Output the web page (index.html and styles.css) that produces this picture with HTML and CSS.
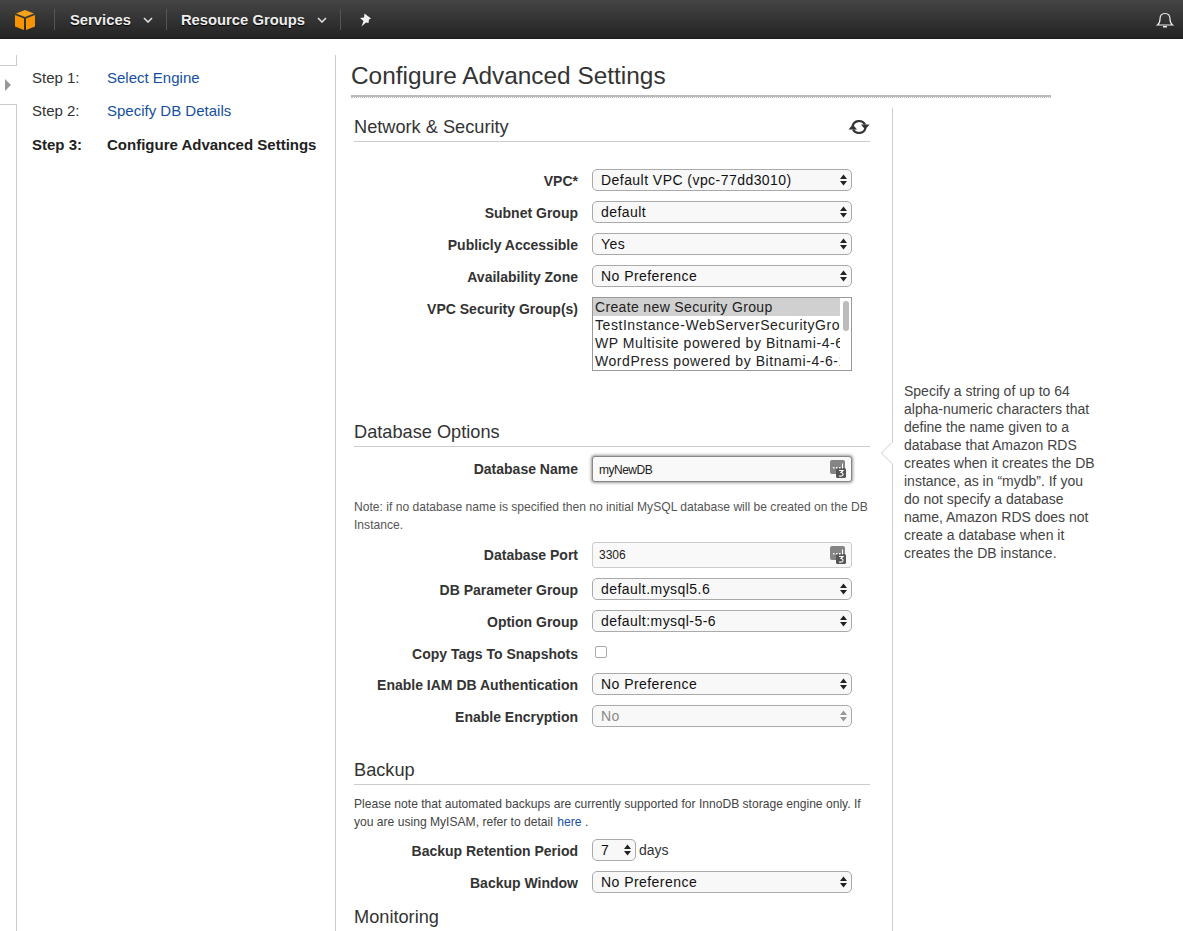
FILE: index.html
```html
<!DOCTYPE html>
<html lang="en">
<head>
    <meta charset="UTF-8">
    <title>Configure Advanced Settings</title>
    <link rel="stylesheet" href="styles.css">
</head>
<body>

    <!-- shared icons -->
    <svg class="sprites" width="0" height="0">
        <symbol id="updown" viewBox="0 0 7 12"><path d="M3.5 0.5 L7 5 H0 Z M3.5 11.5 L7 7 H0 Z"/></symbol>
        <symbol id="keypad" viewBox="0 0 16 18">
            <rect x="0" y="0" width="15" height="14" rx="2" fill="#858585"/>
            <rect x="6" y="8" width="10" height="10" rx="1.5" fill="#555"/>
            <path d="M3 7 h1.5 v1.5 h-1.5 Z M6 7 h1.5 v1.5 h-1.5 Z M9 7 h1.5 v1.5 h-1.5 Z M12 3.5 h1 v5 h-1 Z" fill="#fff"/>
            <path d="M9 10.5 H13 L11 12.5 Q13.5 13 13 14.8 Q12.5 16.5 9 16" fill="none" stroke="#fff" stroke-width="1.1"/>
        </symbol>
        <symbol id="caret" viewBox="0 0 10 6"><path d="M1 1 L5 5 L9 1" fill="none" stroke="#ddd" stroke-width="1.6"/></symbol>
    </svg>

    <div class="navbar">
        <a class="nav-logo" href="#">
            <svg width="24" height="24" viewBox="0 0 24 24">
                <path d="M12 2 L21 5.5 L12 9 L3 5.5 Z" fill="#f7a21b"/>
                <path d="M2 7 L11 10.5 L11 22 L2 18.5 Z" fill="#f79400"/>
                <path d="M22 7 L13 10.5 L13 22 L22 18.5 Z" fill="#f79400"/>
            </svg>
        </a>
        <a class="nav-item nav-services" href="#">Services<svg class="caret" width="10" height="6"><use href="#caret"/></svg></a>
        <a class="nav-item nav-groups" href="#">Resource Groups<svg class="caret" width="10" height="6"><use href="#caret"/></svg></a>
        <a class="nav-pin" href="#">
            <svg width="14" height="14" viewBox="0 0 14 14"><path d="M6.5 0.5 L13 5.5 L11 6.5 L10.5 10 L8 9.5 L3.5 13.5 L5.5 8 L2 5 L6 4.5 Z" fill="#f2f2f2"/></svg>
        </a>
        <a class="nav-bell" href="#">
            <svg width="18" height="18" viewBox="0 0 18 18"><path d="M1.5 14 C3.5 12.5 4 11 4 8 C4 4.5 6 2.5 9 2.5 C12 2.5 14 4.5 14 8 C14 11 14.5 12.5 16.5 14 Z" fill="none" stroke="#eee" stroke-width="1.2"/><path d="M7 15 H11 V16.5 H7 Z" fill="#eee"/></svg>
        </a>
    </div>

    <div class="page">
        <div class="drawer">
            <div class="drawer-top"></div>
            <div class="drawer-arrow"></div>
            <div class="drawer-bottom"></div>
        </div>

        <div class="steps">
            <div class="step"><span class="step-num">Step 1:</span><a href="#">Select Engine</a></div>
            <div class="step"><span class="step-num">Step 2:</span><a href="#">Specify DB Details</a></div>
            <div class="step current"><span class="step-num">Step 3:</span><span>Configure Advanced Settings</span></div>
        </div>

        <div class="content">
            <h1>Configure Advanced Settings</h1>
            <div class="title-dots"></div>

            <div class="columns">
                <div class="form">
                    <h2 class="first">Network &amp; Security
                        <svg width="22" height="18" viewBox="0 0 22 18"><path d="M4.5 8 A6.8 6.8 0 0 1 17 6.5" fill="none" stroke="#333" stroke-width="2.2"/><path d="M13 6.5 H21.5 L17.2 11.5 Z" fill="#333"/><path d="M17.5 10 A6.8 6.8 0 0 1 5 11.5" fill="none" stroke="#333" stroke-width="2.2"/><path d="M9 11.5 H0.5 L4.8 6.5 Z" fill="#333"/></svg>
                    </h2>

                    <div class="rows top-rows">
                        <div class="row"><label>VPC*</label><div class="select"><span>Default VPC (vpc-77dd3010)</span><svg class="arrows" width="7" height="12"><use href="#updown"/></svg></div></div>
                        <div class="row"><label>Subnet Group</label><div class="select"><span>default</span><svg class="arrows" width="7" height="12"><use href="#updown"/></svg></div></div>
                        <div class="row"><label>Publicly Accessible</label><div class="select"><span>Yes</span><svg class="arrows" width="7" height="12"><use href="#updown"/></svg></div></div>
                        <div class="row"><label>Availability Zone</label><div class="select"><span>No Preference</span><svg class="arrows" width="7" height="12"><use href="#updown"/></svg></div></div>
                        <div class="row row-list">
                            <label>VPC Security Group(s)</label>
                            <div class="listbox">
                                <div class="list-items">
                                    <div class="selected">Create new Security Group</div>
                                    <div>TestInstance-WebServerSecurityGroup-1A2B</div>
                                    <div>WP Multisite powered by Bitnami-4-6-1</div>
                                    <div>WordPress powered by Bitnami-4-6-1-0</div>
                                </div>
                                <div class="list-scroll"><div class="list-thumb"></div></div>
                            </div>
                        </div>
                    </div>

                    <h2 class="db-title">Database Options</h2>
                    <div class="row row-db"><label>Database Name</label>
                        <div class="input focused"><span>myNewDB</span><svg class="key" width="16" height="18"><use href="#keypad"/></svg></div>
                    </div>
                    <p class="note">Note: if no database name is specified then no initial MySQL database will be created on the DB Instance.</p>
                    <div class="rows">
                        <div class="row row-port"><label>Database Port</label>
                            <div class="input"><span>3306</span><svg class="key" width="16" height="18"><use href="#keypad"/></svg></div>
                        </div>
                        <div class="row row-param"><label>DB Parameter Group</label><div class="select"><span>default.mysql5.6</span><svg class="arrows" width="7" height="12"><use href="#updown"/></svg></div></div>
                        <div class="row"><label>Option Group</label><div class="select"><span>default:mysql-5-6</span><svg class="arrows" width="7" height="12"><use href="#updown"/></svg></div></div>
                        <div class="row"><label>Copy Tags To Snapshots</label><div class="checkbox"></div></div>
                        <div class="row row-iam"><label>Enable IAM DB Authentication</label><div class="select"><span>No Preference</span><svg class="arrows" width="7" height="12"><use href="#updown"/></svg></div></div>
                        <div class="row"><label>Enable Encryption</label><div class="select disabled"><span>No</span><svg class="arrows" width="7" height="12"><use href="#updown"/></svg></div></div>
                    </div>

                    <h2 class="backup-title">Backup</h2>
                    <p class="note backup-note">Please note that automated backups are currently supported for InnoDB storage engine only. If you are using MyISAM, refer to detail <a href="#">here</a> .</p>
                    <div class="rows backup-rows">
                        <div class="row"><label>Backup Retention Period</label><div class="select small"><span>7</span><svg class="arrows" width="7" height="12"><use href="#updown"/></svg></div><span class="unit">days</span></div>
                        <div class="row"><label>Backup Window</label><div class="select"><span>No Preference</span><svg class="arrows" width="7" height="12"><use href="#updown"/></svg></div></div>
                    </div>
                    <h2 class="monitoring-title">Monitoring</h2>
                </div>

                <div class="help">
                    <div class="help-tip"></div>
                    <p>Specify a string of up to 64 alpha-numeric characters that define the name given to a database that Amazon RDS creates when it creates the DB instance, as in “mydb”. If you do not specify a database name, Amazon RDS does not create a database when it creates the DB instance.</p>
                </div>
            </div>
        </div>
    </div>

</body>
</html>
```

FILE: styles.css
```css
html, body {
    height: 100%;
}

body {
    font-family: "Liberation Sans", Arial, sans-serif;
    font-size: 14px;
    color: #333;
    margin: 0;
    background-color: #fff;
    overflow: hidden;
}

a {
    color: #14509f;
    text-decoration: none;
}

.sprites {
    position: absolute;
}

/* top navigation */
.navbar {
    display: flex;
    align-items: center;
    height: 39px;
    background: linear-gradient(#454545, #232323);
    box-sizing: border-box;
    border-bottom: 1px solid #1c1c1c;
    padding-top: 1px;
}

.navbar a {
    display: flex;
    align-items: center;
    height: 21px;
    color: #eee;
    font-size: 14.8px;
    font-weight: bold;
}

.nav-logo {
    width: 55px;
    padding-left: 13px;
    box-sizing: border-box;
    border-right: 1px solid #555;
}

.nav-item {
    border-right: 1px solid #555;
    text-shadow: 0 1px 1px #000;
}

.nav-services {
    padding: 0 13px 0 15px;
}

.nav-groups {
    padding: 0 13px 0 14px;
}

.caret {
    margin-left: 12px;
}

.nav-pin {
    padding-left: 17px;
}

.nav-bell {
    margin-left: auto;
    padding-right: 9px;
}

/* page layout */
.page {
    display: flex;
    height: 892px;
    padding-top: 16px;
    box-sizing: border-box;
}

.drawer {
    width: 17px;
    flex: none;
}

.drawer-top {
    height: 10px;
    border-right: 1px solid #ccc;
    border-bottom: 1px solid #ccc;
}

.drawer-arrow {
    width: 0;
    height: 0;
    margin: 13px 0 13px 5px;
    border-left: 6px solid #999;
    border-top: 6px solid transparent;
    border-bottom: 6px solid transparent;
}

.drawer-bottom {
    height: 830px;
    border-right: 1px solid #ccc;
    border-top: 1px solid #ccc;
}

.steps {
    width: 319px;
    flex: none;
    box-sizing: border-box;
    padding: 6px 0 0 15px;
    border-right: 1px solid #ccc;
    font-size: 15px;
}

.step {
    display: flex;
    height: 33px;
    line-height: 33px;
}

.step-num {
    width: 75px;
    flex: none;
}

.step.current {
    margin-top: 1px;
    font-weight: bold;
    color: #222;
}

/* main content */
.content {
    width: 750px;
    flex: none;
    padding-left: 15px;
}

h1 {
    width: 700px;
    margin: 0;
    box-sizing: border-box;
    padding: 6px 0 4px 0;
    font-size: 24.4px;
    line-height: 30px;
    font-weight: normal;
    color: #333;
    border-bottom: 2px solid #bbb;
}

.title-dots {
    width: 700px;
    border-top: 1px dotted #bbb;
}

.columns {
    display: flex;
    margin-top: 10px;
}

.form {
    width: 516px;
    flex: none;
    margin-left: 3px;
}

h2 {
    display: flex;
    align-items: center;
    justify-content: space-between;
    margin: 0;
    padding-bottom: 4px;
    font-size: 18.2px;
    line-height: 20px;
    font-weight: normal;
    color: #333;
    border-bottom: 1px solid #ccc;
}

h2.first {
    margin-top: 9px;
}

.rows {
    display: flex;
    flex-direction: column;
}

.top-rows {
    margin-top: 22px;
}

.row {
    display: flex;
    align-items: center;
    height: 32px;
}

.row label {
    width: 224px;
    flex: none;
    margin-right: 14px;
    padding-top: 2px;
    text-align: right;
    font-weight: bold;
    color: #333;
}

.select {
    display: flex;
    align-items: center;
    justify-content: space-between;
    width: 260px;
    height: 22px;
    box-sizing: border-box;
    padding: 0 4px 0 8px;
    border: 1px solid #aaa;
    border-radius: 5px;
    background-color: #f8f8f8;
    color: #111;
    letter-spacing: 0.45px;
}

.select.disabled {
    color: #888;
}

.select.disabled .arrows {
    fill: #999;
}

.select.small {
    width: 44px;
}

.arrows {
    fill: #222;
}

.unit {
    margin-left: 3px;
}

.row-list {
    height: 74px;
    margin-top: 5px;
    align-items: flex-start;
}

.row-list label {
    padding-top: 4px;
}

.listbox {
    display: flex;
    width: 260px;
    height: 74px;
    box-sizing: border-box;
    border: 1px solid #999;
    background-color: #fff;
    color: #222;
}

.list-items {
    width: 247px;
    flex: none;
    overflow: hidden;
    white-space: nowrap;
    line-height: 18px;
    letter-spacing: 0.55px;
}

.list-items div {
    padding-left: 2px;
}

.list-items .selected {
    background-color: #d0d0d0;
    letter-spacing: 0.35px;
}

.list-scroll {
    flex: 1;
    padding: 3px 2px 0 3px;
}

.list-thumb {
    width: 6px;
    height: 30px;
    border-radius: 3px;
    background-color: #bbb;
}

.db-title {
    margin-top: 51px;
}

.row-db {
    height: 26px;
    margin-top: 9px;
}

.row-db label,
.row-port label {
    padding-top: 0;
}

.input {
    display: flex;
    align-items: center;
    justify-content: space-between;
    width: 260px;
    height: 26px;
    box-sizing: border-box;
    padding: 0 5px 0 6px;
    border: 1px solid #ccc;
    border-radius: 3px;
    background-color: #f9f9f9;
    font-size: 12px;
    color: #222;
}

.input.focused {
    border-color: #888;
    box-shadow: 0 0 3px 1px #999;
}

.input.focused span {
    padding-top: 2px;
    letter-spacing: -0.5px;
}

.note {
    margin: 16px 0 0 0;
    font-size: 12.1px;
    line-height: 18px;
    color: #555;
}

.row-port {
    margin-top: 5px;
}

.row-param {
    margin-top: 2px;
}

.row-iam {
    margin-top: -1px;
}

.backup-title {
    margin-top: 28px;
}

.backup-note {
    margin-top: 10px;
    color: #444;
}

.backup-note a {
    margin-left: 1px;
}

.backup-rows {
    margin-top: 3px;
}

.checkbox {
    width: 12px;
    height: 12px;
    box-sizing: border-box;
    margin: -3px 0 0 3px;
    border: 1px solid #aaa;
    border-radius: 2px;
    background-color: #fff;
}

.monitoring-title {
    margin-top: 9px;
    border-bottom: none;
}

.help {
    position: relative;
    width: 207px;
    flex: none;
    box-sizing: border-box;
    margin-left: 22px;
    height: 823px;
    padding: 274px 0 0 11px;
    border-left: 1px solid #ccc;
}

.help p {
    margin: 0;
    line-height: 18px;
    color: #444;
}

/* little notch pointing at the focused field */
.help-tip {
    position: absolute;
    left: -9px;
    top: 337px;
    width: 16px;
    height: 16px;
    box-sizing: border-box;
    background-color: #fff;
    border-left: 1px solid #ddd;
    border-bottom: 1px solid #ddd;
    transform: rotate(45deg);
}
```
